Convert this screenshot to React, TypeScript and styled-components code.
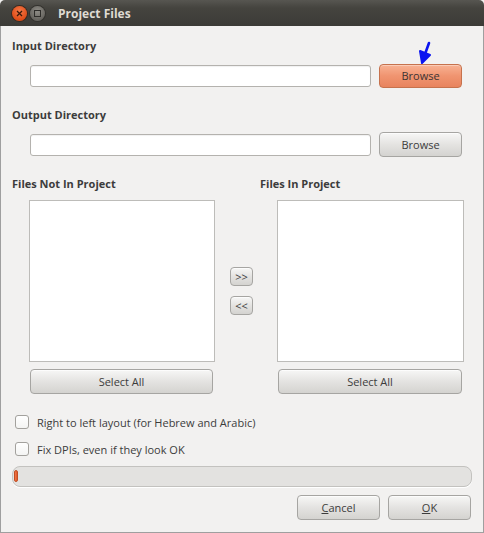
import React from "react";
import styled, { createGlobalStyle, css } from "styled-components";

const Global = createGlobalStyle`
  html, body { margin: 0; padding: 0; background: #f2f1f0; }
  body { font-family: "Open Sans", "DejaVu Sans", sans-serif; }
  * { box-sizing: border-box; }
`;

const FONT = `"Open Sans", "DejaVu Sans", sans-serif`;

const Window = styled.div`
  width: 484px;
  height: 533px;
  display: flex;
  flex-direction: column;
  position: relative;
  font-family: ${FONT};
  font-size: 11px;
  color: #3c3c3c;
`;

const TitleBar = styled.div`
  height: 26px;
  flex: none;
  display: flex;
  align-items: center;
  padding-left: 12px;
  border-radius: 5px 5px 0 0;
  background: linear-gradient(#575651, #45443f 30%, #3c3b37);
`;

const WinButton = styled.div<{ $kind: "close" | "max" }>`
  width: 15px;
  height: 15px;
  border-radius: 50%;
  margin-right: 3px;
  display: flex;
  align-items: center;
  justify-content: center;
  ${(p) =>
    p.$kind === "close"
      ? css`background: radial-gradient(circle at 50% 35%, #f47a4a, #df4b16 70%); box-shadow: 0 0 0 1px #3a2a20;`
      : css`background: radial-gradient(circle at 50% 35%, #8e8c86, #66645f 70%); box-shadow: 0 0 0 1px #33322e;`}
`;

const Title = styled.div`
  margin-left: 10px;
  color: #dfdbd2;
  font-weight: bold;
  font-size: 12px;
`;

const Body = styled.div`
  flex: 1;
  background: #f2f1f0;
  border: 1px solid #9f9f9f;
  border-top: none;
  padding: 13px 0 0 11px;
  display: flex;
  flex-direction: column;
`;

const Label = styled.div<{ $mt?: number }>`
  font-weight: bold;
  line-height: 14px;
  height: 14px;
  margin-top: ${(p) => p.$mt ?? 0}px;
  color: #3c3c3c;
  white-space: nowrap;
`;

const DirRow = styled.div<{ $mt: number }>`
  display: flex;
  align-items: center;
  gap: 8px;
  margin-top: ${(p) => p.$mt}px;
  margin-left: 18px;
  height: 25px;
`;

const TextField = styled.div`
  width: 341px;
  height: 22px;
  background: #fff;
  border: 1px solid #b4b2ae;
  border-radius: 3px;
  box-shadow: inset 0 1px 1px rgba(0,0,0,0.06);
`;

const Button = styled.button<{ $w?: number; $h?: number; $accent?: boolean }>`
  width: ${(p) => p.$w ?? 83}px;
  height: ${(p) => p.$h ?? 25}px;
  font-family: ${FONT};
  font-size: 11px;
  color: #3c3c3c;
  padding: 0;
  border-radius: 4px;
  border: 1px solid #a6a5a2;
  background: linear-gradient(#f7f7f6, #e4e3e1 50%, #d4d3d0);
  box-shadow: inset 0 1px 0 rgba(255,255,255,0.7);
  display: flex;
  align-items: center;
  justify-content: center;
  ${(p) =>
    p.$accent &&
    css`
      border-color: #c6724d;
      background: linear-gradient(#f8b293, #f09470 50%, #e8845e);
      box-shadow: inset 0 1px 0 rgba(255,255,255,0.35);
      color: #3c3434;
    `}
`;

const Mnemonic = styled.span`
  text-decoration: underline;
`;

const FilesGrid = styled.div`
  display: grid;
  grid-template-columns: 202px 46px 203px;
  grid-template-rows: 14px 162px 25px;
  margin-top: 20px;
`;

const ListBox = styled.div<{ $w: number; $col: number }>`
  grid-row: 2;
  grid-column: ${(p) => p.$col};
  width: ${(p) => p.$w}px;
  height: 162px;
  margin-left: 17px;
  margin-top: 9px;
  background: #fff;
  border: 1px solid #bdbcb9;
`;

const SelectWrap = styled.div<{ $col: number }>`
  grid-row: 3;
  grid-column: ${(p) => p.$col};
  margin-left: 18px;
  margin-top: 16px;
`;

const GridLabel = styled(Label)<{ $col: number }>`
  grid-row: 1;
  grid-column: ${(p) => p.$col};
`;

const MoveCol = styled.div`
  grid-row: 2;
  grid-column: 2;
  display: flex;
  flex-direction: column;
  gap: 10px;
  padding-top: 76px;
  padding-left: 16px;
`;

const CheckRow = styled.div<{ $mt: number }>`
  display: flex;
  align-items: center;
  height: 20px;
  margin-top: ${(p) => p.$mt}px;
  margin-left: 3px;
  gap: 8px;
`;

const CheckBox = styled.div`
  width: 14px;
  height: 14px;
  border: 1px solid #a3a19d;
  border-radius: 3px;
  background: linear-gradient(#ffffff, #f4f4f3);
`;

const Progress = styled.div`
  width: 460px;
  height: 21px;
  margin-top: 7px;
  border: 1px solid #c3c2bf;
  border-radius: 8px;
  background: #e3e2e0;
  box-shadow: 0 1px 0 #ffffff;
  padding: 3px 0 0 1px;
`;

const ProgressChip = styled.div`
  width: 4px;
  height: 12px;
  border-radius: 2px;
  background: linear-gradient(90deg, #f0784a, #e0582a);
  border: 1px solid #c24e22;
`;

const Footer = styled.div`
  display: flex;
  justify-content: flex-end;
  gap: 8px;
  margin-top: 8px;
  padding-right: 12px;
`;

const Arrow = styled.svg`
  position: absolute;
  left: 412px;
  top: 40px;
`;

export default function App() {
  return (
    <>
      <Global />
      <Window>
        <TitleBar>
          <WinButton $kind="close">
            <svg width="7" height="7" viewBox="0 0 7 7">
              <path d="M1 1L6 6M6 1L1 6" stroke="#3a1a0a" strokeWidth="1.3" />
            </svg>
          </WinButton>
          <WinButton $kind="max">
            <svg width="7" height="7" viewBox="0 0 7 7">
              <rect x="0.5" y="0.5" width="6" height="6" fill="none" stroke="#2e2d2a" strokeWidth="1" />
            </svg>
          </WinButton>
          <Title>Project Files</Title>
        </TitleBar>
        <Body>
          <Label>Input Directory</Label>
          <DirRow $mt={10}>
            <TextField />
            <Button $w={83} $h={24} $accent>Browse</Button>
          </DirRow>
          <Label $mt={20}>Output Directory</Label>
          <DirRow $mt={10}>
            <TextField />
            <Button $w={83} $h={25}>Browse</Button>
          </DirRow>
          <FilesGrid>
            <GridLabel $col={1}>Files Not In Project</GridLabel>
            <GridLabel $col={3}>Files In Project</GridLabel>
            <ListBox $w={186} $col={1} />
            <MoveCol>
              <Button $w={23} $h={19}>&gt;&gt;</Button>
              <Button $w={23} $h={19}>&lt;&lt;</Button>
            </MoveCol>
            <ListBox $w={187} $col={3} />
            <SelectWrap $col={1}>
              <Button $w={183} $h={25}>Select All</Button>
            </SelectWrap>
            <SelectWrap $col={3}>
              <Button $w={184} $h={25}>Select All</Button>
            </SelectWrap>
          </FilesGrid>
          <CheckRow $mt={34}>
            <CheckBox />
            <span>Right to left layout (for Hebrew and Arabic)</span>
          </CheckRow>
          <CheckRow $mt={7}>
            <CheckBox />
            <span>Fix DPIs, even if they look OK</span>
          </CheckRow>
          <Progress>
            <ProgressChip />
          </Progress>
          <Footer>
            <Button $w={83} $h={25}><Mnemonic>C</Mnemonic>ancel</Button>
            <Button $w={83} $h={25}><Mnemonic>O</Mnemonic>K</Button>
          </Footer>
        </Body>
        <Arrow width="24" height="26" viewBox="0 0 24 26">
          <path d="M17 3 L10.5 21" stroke="#0a14f0" strokeWidth="2.6" fill="none" strokeLinecap="round" />
          <path d="M8 11 L10 23 L18 15 Z" stroke="#0a14f0" strokeWidth="2" fill="#0a14f0" strokeLinejoin="round" />
        </Arrow>
      </Window>
    </>
  );
}
